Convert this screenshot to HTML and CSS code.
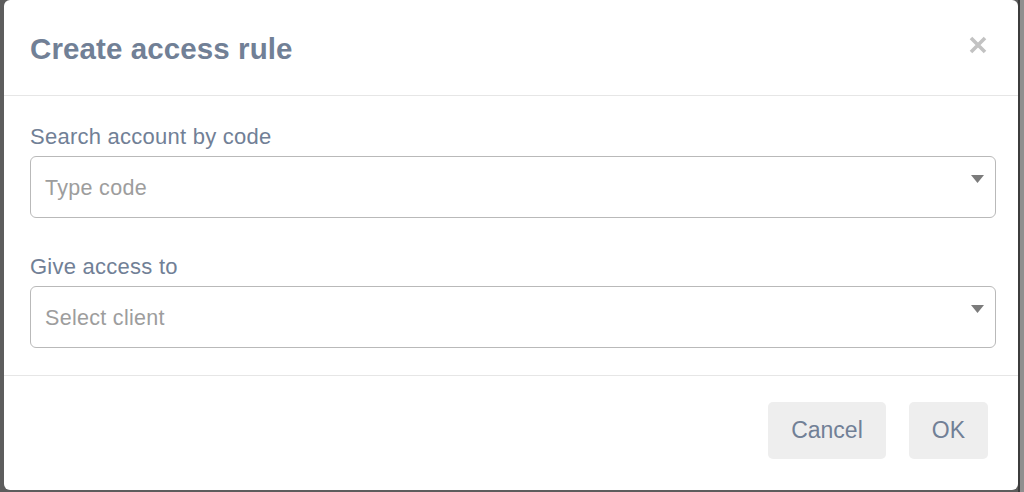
FILE: index.html
```html
<!DOCTYPE html>
<html lang="en">
<head>
<meta charset="utf-8">
<title>Create access rule</title>
<link rel="stylesheet" href="styles.css">
</head>
<body>
<div class="modal">
  <div class="modal-header">
    <h1 class="modal-title">Create access rule</h1>
    <button class="close" aria-label="Close">
      <svg width="18" height="18" viewBox="0 0 18 18"><path d="M2 2 L16 16 M16 2 L2 16" stroke="#c2c2c2" stroke-width="3.6" stroke-linecap="butt"/></svg>
    </button>
  </div>
  <div class="modal-body">
    <div class="field">
      <label class="field-label">Search account by code</label>
      <div class="select">
        <span class="placeholder">Type code</span>
        <svg class="caret" width="13" height="8" viewBox="0 0 13 8"><path d="M0 0 H13 L6.5 8 Z" fill="#7b7b7b"/></svg>
      </div>
    </div>
    <div class="field">
      <label class="field-label">Give access to</label>
      <div class="select">
        <span class="placeholder">Select client</span>
        <svg class="caret" width="13" height="8" viewBox="0 0 13 8"><path d="M0 0 H13 L6.5 8 Z" fill="#7b7b7b"/></svg>
      </div>
    </div>
  </div>
  <div class="modal-footer">
    <button class="btn">Cancel</button>
    <button class="btn">OK</button>
  </div>
</div>
</body>
</html>
```

FILE: styles.css
```css
* { box-sizing: border-box; }

html, body {
  margin: 0;
  height: 100%;
}

body {
  font-family: "Liberation Sans", Arial, Helvetica, sans-serif;
  background: linear-gradient(to right, #5d5d5d 0, #5d5d5d 1018px, #3c3c3c 1018px, #3c3c3c 1020px, #8f8f8f 1020px);
  overflow: hidden;
}

.modal {
  margin-left: 4px;
  width: 1014px;
  height: 490px;
  background: #ffffff;
  border-radius: 6px;
  display: flex;
  flex-direction: column;
}

.modal-header {
  display: flex;
  justify-content: space-between;
  align-items: flex-start;
  padding: 31px 31px 28px 26px;
  border-bottom: 1px solid #e6e6e6;
}

.modal-title {
  margin: 0;
  font-size: 29.5px;
  line-height: 36px;
  font-weight: bold;
  letter-spacing: 0.1px;
  color: #718096;
}

.close {
  margin-top: 5px;
  padding: 0;
  border: 0;
  background: none;
  width: 18px;
  height: 18px;
  display: block;
}

.close svg { display: block; }

.modal-body {
  padding: 29px 22px 27px 26px;
  border-bottom: 1px solid #e6e6e6;
  display: flex;
  flex-direction: column;
  gap: 37px;
}

.field {
  display: flex;
  flex-direction: column;
  gap: 7px;
}

.field-label {
  font-size: 22px;
  line-height: 24px;
  letter-spacing: 0.25px;
  color: #718096;
}

.select {
  height: 62px;
  border: 1.5px solid #b9b9b9;
  border-radius: 6px;
  display: flex;
  align-items: center;
  padding: 3px 11px 0 14px;
}

.placeholder {
  flex: 1;
  font-size: 21.5px;
  letter-spacing: 0.3px;
  color: #9d9d9d;
}

.caret {
  align-self: flex-start;
  margin-top: 15px;
  display: block;
}

.modal-footer {
  display: flex;
  justify-content: flex-end;
  gap: 23px;
  padding: 26px 30px 0 26px;
}

.btn {
  height: 57px;
  padding: 0 23px;
  border: 0;
  border-radius: 5px;
  background: #eeeeee;
  color: #718096;
  font-family: "Liberation Sans", Arial, Helvetica, sans-serif;
  font-size: 23px;
}
```
